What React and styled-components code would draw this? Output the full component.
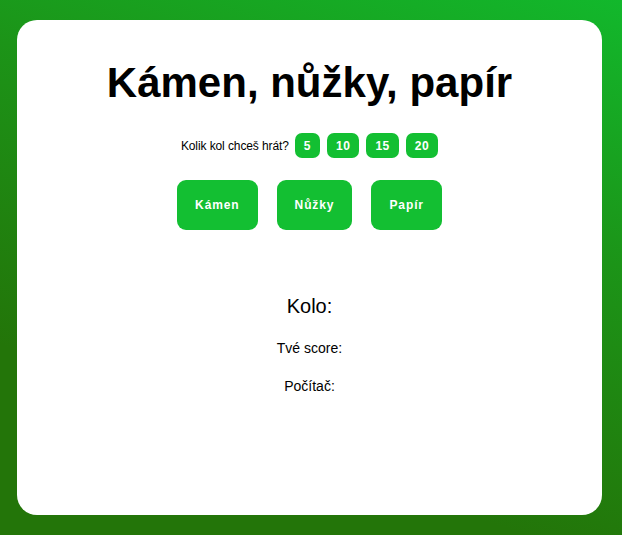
import React from "react"
import styled, { createGlobalStyle } from "styled-components"

const GlobalStyle = createGlobalStyle`
  html, body {
    margin: 0;
    padding: 0;
    height: 100%;
  }
  body {
    font-family: "Liberation Sans", Arial, sans-serif;
    background: linear-gradient(200deg, #12b82c 0%, #1c9418 35%, #237509 75%, #237509 100%);
    overflow: hidden;
  }
`

const Card = styled.div`
  box-sizing: border-box;
  width: 585px;
  height: 495px;
  margin: 20px 0 0 17px;
  background: #fff;
  border-radius: 20px;
  display: flex;
  flex-direction: column;
  align-items: center;
  padding-top: 39px;
`

const Title = styled.h1`
  margin: 0;
  font-size: 42px;
  font-weight: bold;
  color: #000;
`

const RoundsRow = styled.div`
  display: flex;
  align-items: center;
  gap: 7px;
  margin-top: 26px;
  font-size: 12px;
  color: #000;
`

const RoundsLabel = styled.span`
  margin-right: -1px;
  letter-spacing: -0.1px;
`

const RoundButton = styled.button`
  height: 25px;
  min-width: 25px;
  padding: 0 9px;
  border: none;
  border-radius: 7px;
  background: #13bf32;
  color: #fff;
  font-family: "Liberation Sans", Arial, sans-serif;
  font-size: 12px;
  font-weight: bold;
  letter-spacing: 0.5px;
  cursor: pointer;
`

const Choices = styled.div`
  display: flex;
  gap: 19px;
  margin-top: 22px;
`

const ChoiceButton = styled.button`
  height: 50px;
  padding: 0 18px;
  border: none;
  border-radius: 9px;
  background: #13bf32;
  color: #fff;
  font-family: "Liberation Sans", Arial, sans-serif;
  font-size: 12px;
  font-weight: bold;
  letter-spacing: 0.9px;
  cursor: pointer;
`

const Stats = styled.div`
  display: flex;
  flex-direction: column;
  align-items: center;
  margin-top: 65px;
  color: #000;
`

const RoundLabel = styled.div`
  font-size: 20px;
`

const StatLine = styled.div`
  font-size: 14px;
  margin-top: ${p => p.$gap}px;
`

const App = () => {
  return (
    <>
      <GlobalStyle />
      <Card>
        <Title>Kámen, nůžky, papír</Title>
        <RoundsRow>
          <RoundsLabel>Kolik kol chceš hrát?</RoundsLabel>
          {[5, 10, 15, 20].map(n => (
            <RoundButton key={n}>{n}</RoundButton>
          ))}
        </RoundsRow>
        <Choices>
          <ChoiceButton>Kámen</ChoiceButton>
          <ChoiceButton>Nůžky</ChoiceButton>
          <ChoiceButton>Papír</ChoiceButton>
        </Choices>
        <Stats>
          <RoundLabel>Kolo:</RoundLabel>
          <StatLine $gap={22}>Tvé score:</StatLine>
          <StatLine $gap={22}>Počítač:</StatLine>
        </Stats>
      </Card>
    </>
  )
}

export default App
